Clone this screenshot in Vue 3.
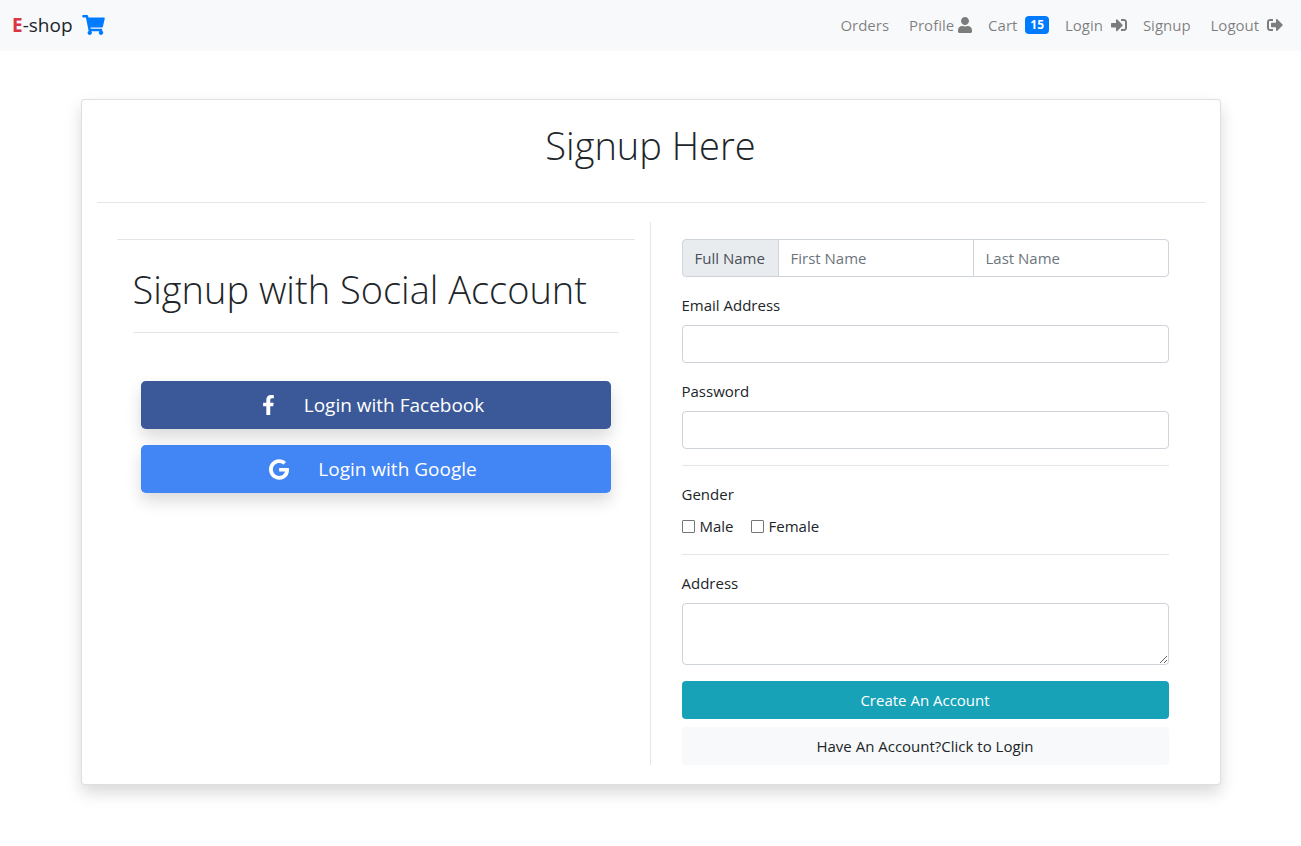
<script setup>
const navItems = [
  { label: 'Orders' },
  { label: 'Profile', icon: 'user' },
  { label: 'Cart', badge: 15 },
  { label: 'Login', icon: 'in' },
  { label: 'Signup' },
  { label: 'Logout', icon: 'out' }
]
</script>

<template>
  <nav class="navbar">
    <a class="brand" href="#">
      <span class="brand-e">E</span>-shop
      <svg class="cart-icon" viewBox="0 0 576 512"><path fill="currentColor" d="M528.12 301.319l47.273-208C578.806 78.301 567.391 64 551.99 64H159.208l-9.166-44.81C147.758 8.021 137.93 0 126.529 0H24C10.745 0 0 10.745 0 24v16c0 13.255 10.745 24 24 24h69.883l70.248 343.435C147.325 417.1 136 435.222 136 456c0 30.928 25.072 56 56 56s56-25.072 56-56c0-15.674-6.447-29.835-16.824-40h209.647C430.447 426.165 424 440.326 424 456c0 30.928 25.072 56 56 56s56-25.072 56-56c0-22.172-12.888-41.332-31.579-50.405l5.517-24.276c3.413-15.018-8.002-29.319-23.403-29.319H218.117l-6.545-32h293.145c11.206 0 20.92-7.754 23.403-18.681z"/></svg>
    </a>
    <ul class="nav-list">
      <li v-for="item in navItems" :key="item.label">
        <a class="nav-link" href="#">
          {{ item.label }}
          <span v-if="item.badge" class="badge">{{ item.badge }}</span>
          <svg v-if="item.icon === 'user'" class="nav-icon user-icon" viewBox="0 0 448 512"><path fill="currentColor" d="M224 256c70.7 0 128-57.3 128-128S294.7 0 224 0 96 57.3 96 128s57.3 128 128 128zm89.6 32h-16.7c-22.2 10.2-46.9 16-72.9 16s-50.6-5.8-72.9-16h-16.7C60.2 288 0 348.2 0 422.4V464c0 26.5 21.5 48 48 48h352c26.5 0 48-21.5 48-48v-41.6c0-74.2-60.2-134.4-134.4-134.4z"/></svg>
          <svg v-if="item.icon === 'in'" class="nav-icon" viewBox="0 0 512 512"><path fill="currentColor" d="M416 448h-84c-6.6 0-12-5.4-12-12v-40c0-6.6 5.4-12 12-12h84c17.7 0 32-14.3 32-32V160c0-17.7-14.3-32-32-32h-84c-6.6 0-12-5.4-12-12V76c0-6.6 5.4-12 12-12h84c53 0 96 43 96 96v192c0 53-43 96-96 96zm-47-201L201 79c-15-15-41-4.5-41 17v96H24c-13.3 0-24 10.7-24 24v96c0 13.3 10.7 24 24 24h136v96c0 21.5 26 32 41 17l168-168c9.3-9.4 9.3-24.6 0-34z"/></svg>
          <svg v-if="item.icon === 'out'" class="nav-icon" viewBox="0 0 512 512"><path fill="currentColor" d="M497 273L329 441c-15 15-41 4.5-41-17v-96H152c-13.3 0-24-10.7-24-24v-96c0-13.3 10.7-24 24-24h136V88c0-21.4 25.9-32 41-17l168 168c9.3 9.4 9.3 24.6 0 34zM192 436v-40c0-6.6-5.4-12-12-12H96c-17.7 0-32-14.3-32-32V160c0-17.7 14.3-32 32-32h84c6.6 0 12-5.4 12-12V76c0-6.6-5.4-12-12-12H96c-53 0-96 43-96 96v192c0 53 43 96 96 96h84c6.6 0 12-5.4 12-12z"/></svg>
        </a>
      </li>
    </ul>
  </nav>

  <div class="card">
    <h1 class="card-title">Signup Here</h1>
    <hr class="title-rule">
    <div class="columns">
      <section class="social">
        <hr class="social-top">
        <div class="social-inner">
          <h2 class="social-title">Signup with Social Account</h2>
          <hr class="social-rule">
          <div class="social-buttons">
            <a class="social-btn fb" href="#">
              <svg class="fb-icon" viewBox="0 0 320 512"><path fill="currentColor" d="M279.14 288l14.22-92.66h-88.91v-60.13c0-25.35 12.42-50.06 52.24-50.06h40.42V6.26S260.43 0 225.36 0c-73.22 0-121.08 44.38-121.08 124.72v70.62H22.89V288h81.39v224h100.17V288z"/></svg>
              Login with Facebook
            </a>
            <a class="social-btn google" href="#">
              <svg class="google-icon" viewBox="0 0 488 512"><path fill="currentColor" d="M488 261.8C488 403.3 391.1 504 248 504 110.8 504 0 393.2 0 256S110.8 8 248 8c66.8 0 123 24.5 166.3 64.9l-67.5 64.9C258.5 52.6 94.3 116.6 94.3 256c0 86.5 69.1 156.6 153.7 156.6 98.2 0 135-70.4 140.8-106.9H248v-85.3h236.1c2.3 12.7 3.9 24.9 3.9 41.4z"/></svg>
              Login with Google
            </a>
          </div>
        </div>
      </section>

      <form class="signup-form" @submit.prevent>
        <div class="input-group">
          <span class="input-addon">Full Name</span>
          <input class="control" type="text" placeholder="First Name">
          <input class="control" type="text" placeholder="Last Name">
        </div>
        <div class="field">
          <label for="email">Email Address</label>
          <input id="email" class="control" type="email">
        </div>
        <div class="field">
          <label for="password">Password</label>
          <input id="password" class="control" type="password">
        </div>
        <hr class="form-rule">
        <div class="gender">
          <div class="gender-label">Gender</div>
          <div class="gender-options">
            <label><input type="checkbox"> Male</label>
            <label><input type="checkbox"> Female</label>
          </div>
        </div>
        <hr class="form-rule">
        <div class="field">
          <label for="address">Address</label>
          <textarea id="address" class="control area"></textarea>
        </div>
        <button class="create-btn" type="submit">Create An Account</button>
        <a class="login-link" href="#">Have An Account?Click to Login</a>
      </form>
    </div>
  </div>
</template>

<style>
body {
  background: #fff;
}
</style>

<style scoped>
* {
  box-sizing: border-box;
}

.navbar,
.card {
  font-family: "Open Sans", sans-serif;
  font-size: 15px;
  color: #212529;
}

a {
  text-decoration: none;
}

.navbar {
  display: flex;
  justify-content: space-between;
  align-items: center;
  height: 51px;
  padding: 0 10px 2px 12px;
  background: #f8f9fa;
}

.brand {
  display: flex;
  align-items: center;
  font-size: 19px;
  color: #212529;
  white-space: pre;
}

.brand-e {
  color: #dc3545;
  font-weight: 700;
}

.cart-icon {
  width: 23px;
  height: 20px;
  margin-left: 5px;
  color: #007bff;
}

.nav-list {
  display: flex;
  list-style: none;
  margin: 0;
  padding: 0;
}

.nav-link {
  display: flex;
  align-items: center;
  padding: 0 8px;
  color: rgba(0, 0, 0, .5);
  white-space: pre;
}

.nav-icon {
  width: 16px;
  height: 16px;
  margin-left: 4px;
  color: rgba(0, 0, 0, .5);
}

.user-icon {
  width: 14px;
  margin-left: 0;
}

.badge {
  margin-left: 4px;
  padding: 2px 5px;
  border-radius: 4px;
  background: #007bff;
  color: #fff;
  font-size: 12px;
  font-weight: 700;
  line-height: 14px;
}

.card {
  width: 1140px;
  margin: 48px auto 44px;
  padding: 0 15px 19px;
  border: 1px solid rgba(0, 0, 0, .125);
  border-radius: 4px;
  background: #fff;
  box-shadow: 0 8px 16px rgba(0, 0, 0, .15);
}

.card-title {
  margin: 0;
  padding-top: 20px;
  height: 102px;
  font-size: 38px;
  font-weight: 300;
  line-height: 50px;
  text-align: center;
}

hr {
  margin: 0;
  border: 0;
  border-top: 1px solid rgba(0, 0, 0, .1);
}

.columns {
  display: grid;
  grid-template-columns: 554px 1fr;
  margin-top: 19px;
}

.social {
  padding: 17px 15px 0 20px;
  border-right: 1px solid rgba(0, 0, 0, .1);
}

.social-inner {
  padding: 0 16px;
}

.social-title {
  margin: 0;
  padding-top: 24px;
  height: 92px;
  font-size: 38px;
  font-weight: 300;
  line-height: 50px;
  white-space: nowrap;
}

.social-buttons {
  display: flex;
  flex-direction: column;
  gap: 16px;
  padding: 48px 8px 0;
}

.social-btn {
  display: flex;
  justify-content: center;
  align-items: center;
  height: 48px;
  border-radius: 4.8px;
  color: #fff;
  font-size: 19px;
  box-shadow: 0 8px 16px rgba(0, 0, 0, .15);
  white-space: pre;
}

.fb {
  background: #3b5998;
}

.google {
  background: #4285f4;
}

.fb-icon {
  width: 13px;
  height: 20px;
  margin-right: 24px;
}

.google-icon {
  width: 20px;
  height: 21px;
  margin-right: 24px;
}

.signup-form {
  display: flex;
  flex-direction: column;
  padding: 17px 36px 0 31px;
}

.control {
  display: block;
  width: 100%;
  height: 38px;
  padding: 6px 12px;
  border: 1px solid #ced4da;
  border-radius: 4px;
  background: #fff;
  font: inherit;
  color: #495057;
  outline: none;
}

.control::placeholder {
  color: #6c757d;
}

.input-group {
  display: flex;
  margin-bottom: 16px;
}

.input-addon {
  flex: none;
  display: flex;
  align-items: center;
  height: 38px;
  width: 97px;
  padding: 0 12px;
  border: 1px solid #ced4da;
  border-radius: 4px 0 0 4px;
  background: #e9ecef;
  color: #495057;
  white-space: nowrap;
}

.input-group .control {
  flex: 1;
  min-width: 0;
  margin-left: -1px;
  border-radius: 0;
}

.input-group .control:last-child {
  border-radius: 0 4px 4px 0;
}

.field {
  display: flex;
  flex-direction: column;
  margin-bottom: 16px;
}

.field label {
  height: 32px;
  line-height: 24px;
}

.form-rule {
  margin-bottom: 16px;
}

.gender {
  margin-bottom: 16px;
}

.gender-label {
  height: 32px;
  line-height: 24px;
}

.gender-options {
  display: flex;
  gap: 17px;
  height: 24px;
}

.gender-options label {
  display: flex;
  align-items: center;
  gap: 5px;
}

.gender-options input {
  appearance: none;
  width: 13px;
  height: 13px;
  margin: 0;
  border: 1px solid #767676;
  border-radius: 1px;
  background: #fff;
}

.area {
  height: 62px;
  resize: vertical;
}

.create-btn {
  height: 38px;
  border: 0;
  border-radius: 4px;
  background: #17a2b8;
  color: #fff;
  font: inherit;
}

.login-link {
  display: flex;
  justify-content: center;
  align-items: center;
  height: 38px;
  margin-top: 8px;
  border-radius: 4px;
  background: #f8f9fa;
  color: #212529;
}
</style>
